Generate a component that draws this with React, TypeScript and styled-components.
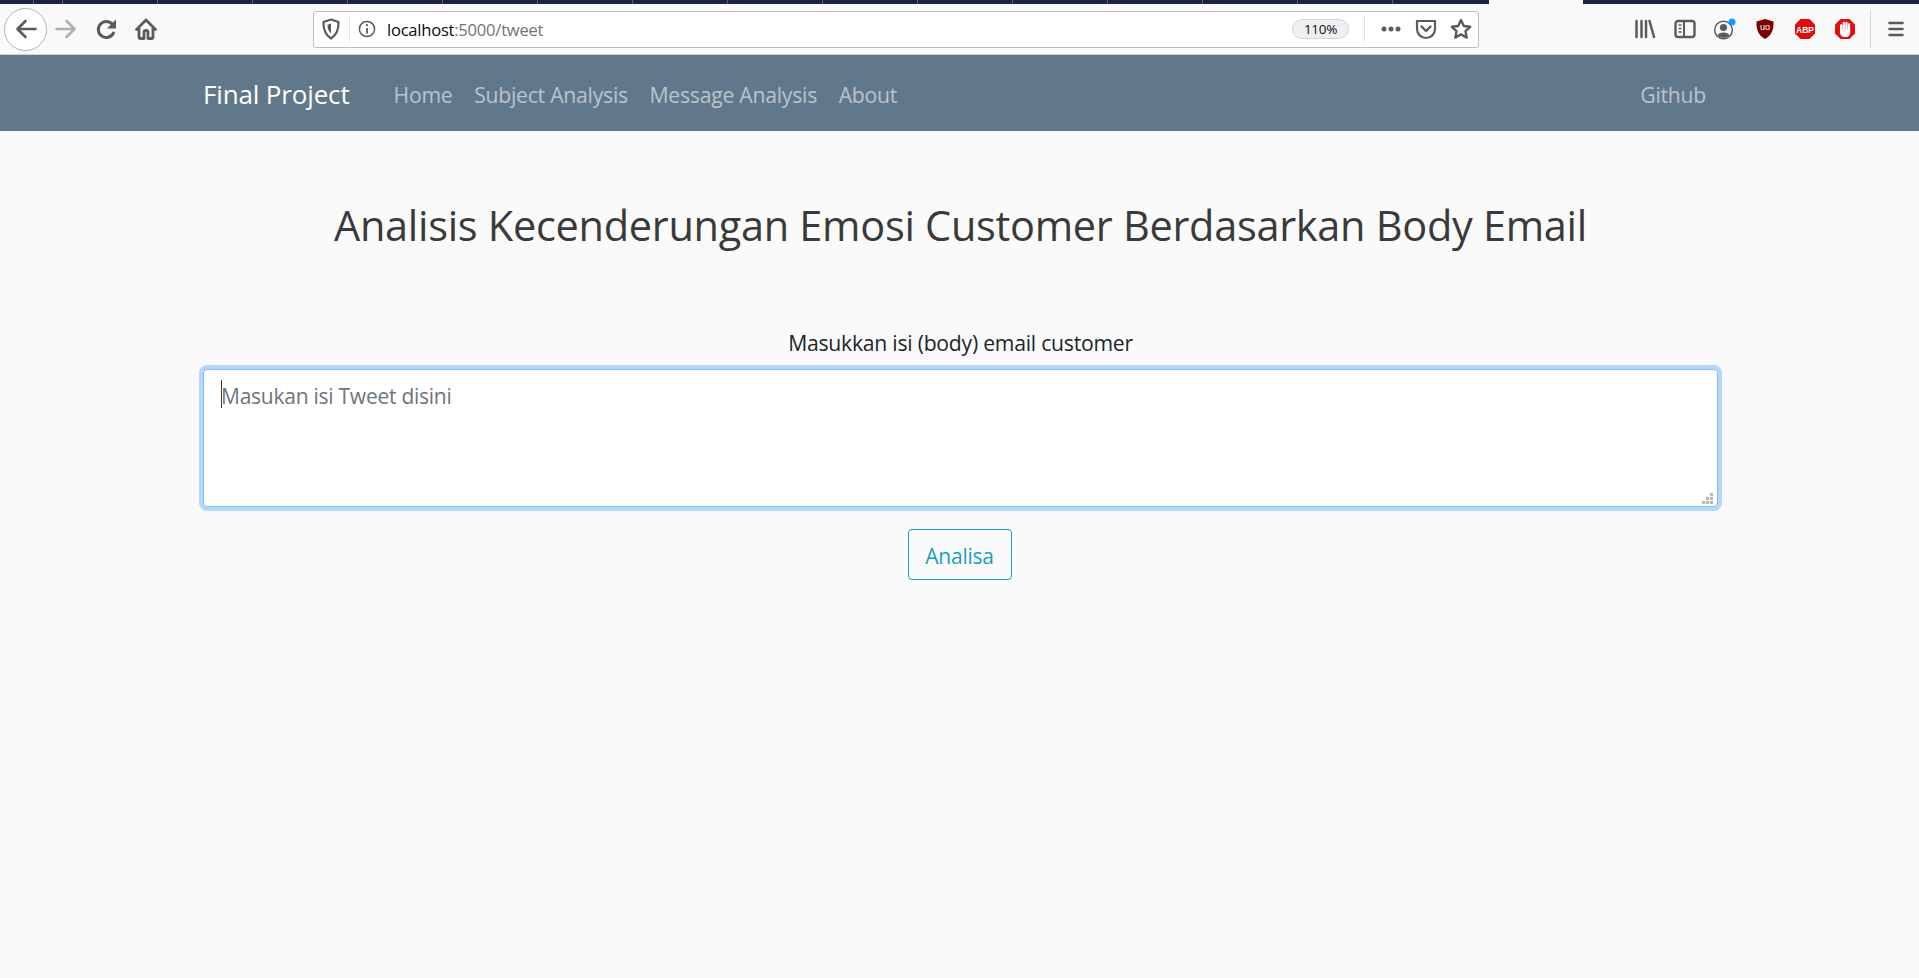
import React from "react";
import styled, { createGlobalStyle } from "styled-components";

const FONT = `"Open Sans", "Noto Sans", "Liberation Sans", sans-serif`;

const Global = createGlobalStyle`
  html, body { margin: 0; padding: 0; height: 100%; background: #fafafa; overflow: hidden; }
  body { font-family: ${FONT}; }
  * { box-sizing: border-box; }
`;

const TabStrip = styled.div`
  display: flex;
  height: 4px;
  background: #1c2143;
`;
const TabGap = styled.div<{ $w: number }>`
  width: ${(p) => p.$w}px;
  flex: none;
  border-right: 1px solid #5a5e78;
`;
const TabEnd = styled.div<{ $w: number }>`
  width: ${(p) => p.$w}px;
  flex: none;
`;
const ActiveTab = styled.div`
  width: 94px;
  flex: none;
  background: #fafafa;
`;

const Chrome = styled.div`
  display: flex;
  align-items: center;
  height: 51px;
  background: #f9f9fa;
  border-bottom: 1px solid #cfcfd2;
`;
const BackCircle = styled.div`
  width: 43px;
  height: 43px;
  flex: none;
  margin-left: 4px;
  border: 1px solid #b4b4b4;
  border-radius: 50%;
  background: #fff;
  display: flex;
  align-items: center;
  justify-content: center;
`;
const Slot = styled.div<{ $w: number; $ml?: number }>`
  width: ${(p) => p.$w}px;
  margin-left: ${(p) => p.$ml ?? 0}px;
  flex: none;
  display: flex;
  align-items: center;
  justify-content: center;
`;
const IconSvg = styled.svg`
  flex: none;
  display: block;
`;
const UrlBar = styled.div`
  width: 1166px;
  height: 37px;
  flex: none;
  margin-left: 148px;
  background: #fff;
  border: 1px solid #bdbdbd;
  border-radius: 3px;
  display: flex;
  align-items: center;
`;
const UrlDivider = styled.div<{ $ml: number; $h: number }>`
  width: 1px;
  height: ${(p) => p.$h}px;
  flex: none;
  background: #e3e3e5;
  margin-left: ${(p) => p.$ml}px;
`;
const UrlText = styled.div`
  font-size: 16.6px;
  color: #0c0c0d;
  width: 905px;
  margin-left: 4px;
  padding-top: 1px;
  flex: none;
  white-space: nowrap;
  letter-spacing: -0.25px;
`;
const UrlMuted = styled.span`
  color: #737373;
`;
const ZoomPill = styled.div`
  width: 57px;
  height: 20px;
  flex: none;
  border: 1px solid #d4d4d4;
  border-radius: 10px;
  background: #f0f0f2;
  color: #0c0c0d;
  font-size: 13.5px;
  display: flex;
  align-items: center;
  justify-content: center;
  letter-spacing: -0.3px;
`;
const ToolbarDivider = styled.div`
  width: 1px;
  height: 38px;
  flex: none;
  background: #d6d6d8;
  margin-left: 5px;
`;

const NavBar = styled.nav`
  height: 76px;
  background: #607889;
  display: flex;
  align-items: center;
  padding: 2px 213px 0 203px;
`;
const Brand = styled.a`
  font-size: 26px;
  color: #fff;
  margin-right: 44px;
  white-space: nowrap;
  letter-spacing: -0.15px;
`;
const NavLinks = styled.div`
  display: flex;
  gap: 21.7px;
  flex: 1;
`;
const NavLink = styled.a`
  font-size: 21.2px;
  color: rgba(255, 255, 255, 0.58);
  white-space: nowrap;
  letter-spacing: -0.25px;
`;

const Main = styled.main`
  width: 1515px;
  margin-left: 203px;
  display: flex;
  flex-direction: column;
  align-items: center;
`;
const Title = styled.h1`
  margin: 67px 0 0;
  font-size: 41.5px;
  line-height: 55px;
  font-weight: 400;
  color: #3a3a3a;
  white-space: nowrap;
  letter-spacing: -0.3px;
`;
const Label = styled.label`
  margin-top: 75px;
  font-size: 21.2px;
  line-height: 29px;
  color: #212529;
  letter-spacing: -0.25px;
`;
const AreaWrap = styled.div`
  position: relative;
  width: 100%;
  height: 138px;
  margin-top: 12px;
`;
const Area = styled.textarea`
  display: block;
  width: 100%;
  height: 100%;
  resize: none;
  outline: none;
  padding: 12px 17px;
  font-family: ${FONT};
  font-size: 21px;
  line-height: 29px;
  letter-spacing: -0.25px;
  background: #fff;
  color: #495057;
  border: 1px solid #80bdff;
  border-radius: 4px;
  box-shadow: 0 0 0 4px #b7d7fa;
  &::placeholder { color: #6c757d; opacity: 1; }
`;
const Caret = styled.div`
  position: absolute;
  left: 18px;
  top: 11px;
  width: 1px;
  height: 28px;
  background: #3a3a3a;
`;
const Grip = styled.svg`
  position: absolute;
  right: 3px;
  bottom: 1px;
`;
const Analyze = styled.button`
  margin: 22px 2px 0 0;
  width: 104px;
  height: 51px;
  background: transparent;
  border: 1px solid #17a2b8;
  border-radius: 4px;
  color: #17a2b8;
  font-family: ${FONT};
  font-size: 21px;
  letter-spacing: -0.25px;
  padding: 2px 0 0;
`;

const gray = "#5b5b5c";
const S = ({ w = 24, h = 24, children }: { w?: number; h?: number; children: React.ReactNode }) => (
  <IconSvg width={w} height={h} viewBox={`0 0 ${w} ${h}`} fill="none">{children}</IconSvg>
);

const Back = () => (
  <S><path d="M21.5 12H4M11.5 4 3.5 12l8 8" stroke={gray} strokeWidth="2.6" strokeLinecap="round" strokeLinejoin="round" /></S>
);
const Forward = () => (
  <S><path d="M2.5 12H20M12.5 4l8 8-8 8" stroke="#b1b1b3" strokeWidth="2.6" strokeLinecap="round" strokeLinejoin="round" /></S>
);
const Reload = () => (
  <S>
    <path d="M18.500 16A8 8 0 1 1 17.600 7.500" stroke={gray} strokeWidth="3" strokeLinecap="round" />
    <path d="M21 2.500v9h-9z" fill={gray} />
  </S>
);
const Home = () => (
  <S>
    <path d="M2.500 12.500 12 3l9.500 9.500" stroke={gray} strokeWidth="2.800" strokeLinecap="round" strokeLinejoin="round" />
    <path d="M5 11v9a1.500 1.500 0 0 0 1.500 1.500h3.500V15.500a2 2 0 0 1 4 0v6h3.500A1.500 1.500 0 0 0 19 20v-9" stroke={gray} strokeWidth="2.800" strokeLinejoin="round" />
  </S>
);
const Shield = () => (
  <S w={18} h={22}>
    <path d="M1.500 4 9 1.500 16.500 4c.3 7-1.500 12.500-7.500 16.500C3 16.500 1.200 11 1.500 4Z" stroke={gray} strokeWidth="2.200" strokeLinejoin="round" />
    <path d="M9 5.500v10c-2.500-2-3.500-5-3.500-8.800Z" fill={gray} />
  </S>
);
const Info = () => (
  <S w={18} h={18}>
    <circle cx="9" cy="9" r="7.600" stroke={gray} strokeWidth="1.500" />
    <circle cx="9" cy="5.200" r="1.100" fill={gray} />
    <path d="M9 8v5.500" stroke={gray} strokeWidth="1.800" />
  </S>
);
const Dots = () => (
  <S w={22} h={8}>
    <circle cx="4" cy="4" r="2.500" fill={gray} /><circle cx="11" cy="4" r="2.500" fill={gray} /><circle cx="18" cy="4" r="2.500" fill={gray} />
  </S>
);
const Pocket = () => (
  <S w={22} h={22}>
    <path d="M2 3h18v8a9 9 0 0 1-18 0Z" stroke={gray} strokeWidth="2.200" strokeLinejoin="round" />
    <path d="m6.500 8.500 4.500 4.500 4.500-4.500" stroke={gray} strokeWidth="2.400" strokeLinecap="round" strokeLinejoin="round" />
  </S>
);
const Star = () => (
  <S w={22} h={22}>
    <path d="m11 2 2.800 6 6.400.8-4.700 4.400 1.200 6.400L11 16.400l-5.700 3.200 1.200-6.400L1.800 8.800 8.200 8Z" stroke={gray} strokeWidth="2.400" strokeLinejoin="round" />
  </S>
);
const Library = () => (
  <S w={22} h={20}>
    <path d="M2.500 2v16M7.500 2v16M12 2v16M15.500 2 20 18" stroke={gray} strokeWidth="2.500" strokeLinecap="round" />
  </S>
);
const Sidebar = () => (
  <S w={22} h={20}>
    <rect x="1.500" y="2" width="19" height="16" rx="2.500" stroke={gray} strokeWidth="2.400" />
    <path d="M10 2v16" stroke={gray} strokeWidth="2" />
    <path d="M4.500 6H7.500M4.500 9.500H7.500M4.500 13H7.500" stroke={gray} strokeWidth="1.500" />
  </S>
);
const Account = () => (
  <S w={24} h={24}>
    <circle cx="10.500" cy="13" r="8.800" stroke={gray} strokeWidth="1.500" />
    <circle cx="10.500" cy="10.500" r="3.600" fill={gray} />
    <path d="M4.500 18.500c1-4 11-4 12 0a8.500 8.500 0 0 1-12 0Z" fill={gray} />
    <circle cx="19" cy="5" r="3.500" fill="#0a9dff" />
  </S>
);
const UBlock = () => (
  <S w={20} h={22}>
    <path d="M1.500 3.500 10 1l8.500 2.500c.3 8-1.500 13.500-8.500 17.500C3 17 1.200 11.500 1.500 3.500Z" fill="#800000" />
    <text x="10" y="11.500" textAnchor="middle" fontFamily="Liberation Sans" fontSize="9" fill="#fff">uo</text>
  </S>
);
const Abp = () => (
  <S w={22} h={22}>
    <path d="M6.500 1h9L21 6.500v9L15.500 21h-9L1 15.500v-9Z" fill="#e00b0b" />
    <text x="11" y="14.500" textAnchor="middle" fontFamily="Liberation Sans" fontSize="8.500" fontWeight="700" fill="#fff">ABP</text>
  </S>
);
const Stop = () => (
  <S w={22} h={22}>
    <path d="M6.500 1h9L21 6.500v9L15.500 21h-9L1 15.500v-9Z" fill="#e60d0d" />
    <path d="M7.200 13V7.500M9.800 12V4.800M12.400 12V4.800M15 12.500V6.500" stroke="#fff" strokeWidth="2.300" strokeLinecap="round" />
    <path d="M6 11.500h10.200v3c0 2.500-1.700 4.500-4.200 4.500h-1.500C8 19 6 17 6 14.500Z" fill="#fff" />
  </S>
);
const Menu = () => (
  <S w={18} h={18}>
    <path d="M2.500 3h13M2.500 9h13M2.500 15h13" stroke={gray} strokeWidth="2.600" strokeLinecap="round" />
  </S>
);

const tabWidths = [34, 29, ...Array.from({ length: 14 }, () => 95)];

export default function App() {
  return (
    <>
      <Global />
      <TabStrip>
        {tabWidths.map((w, i) => (
          <TabGap key={i} $w={w} />
        ))}
        <TabEnd $w={96} />
        <ActiveTab />
        <TabEnd $w={336} />
      </TabStrip>
      <Chrome>
        <BackCircle><Back /></BackCircle>
        <Slot $w={41} $ml={-2}><Forward /></Slot>
        <Slot $w={41}><Reload /></Slot>
        <Slot $w={38}><Home /></Slot>
        <UrlBar>
          <Slot $w={34}><Shield /></Slot>
          <UrlDivider $ml={1} $h={26} />
          <Slot $w={33}><Info /></Slot>
          <UrlText>localhost<UrlMuted>:5000/tweet</UrlMuted></UrlText>
          <ZoomPill>110%</ZoomPill>
          <UrlDivider $ml={15} $h={26} />
          <Slot $w={52}><Dots /></Slot>
          <Slot $w={17}><Pocket /></Slot>
          <Slot $w={53}><Star /></Slot>
        </UrlBar>
        <Slot $w={40} $ml={146}><Library /></Slot>
        <Slot $w={40}><Sidebar /></Slot>
        <Slot $w={40}><Account /></Slot>
        <Slot $w={40}><UBlock /></Slot>
        <Slot $w={40}><Abp /></Slot>
        <Slot $w={40}><Stop /></Slot>
        <ToolbarDivider />
        <Slot $w={50}><Menu /></Slot>
      </Chrome>
      <NavBar>
        <Brand>Final Project</Brand>
        <NavLinks>
          <NavLink>Home</NavLink>
          <NavLink>Subject Analysis</NavLink>
          <NavLink>Message Analysis</NavLink>
          <NavLink>About</NavLink>
        </NavLinks>
        <NavLink>Github</NavLink>
      </NavBar>
      <Main>
        <Title>Analisis Kecenderungan Emosi Customer Berdasarkan Body Email</Title>
        <Label>Masukkan isi (body) email customer</Label>
        <AreaWrap>
          <Area placeholder="Masukan isi Tweet disini" />
          <Caret />
          <Grip width="14" height="14" viewBox="0 0 14 14" fill="#b5b5b5">
            <rect x="9" y="1" width="3" height="3" />
            <rect x="5" y="5" width="3" height="3" /><rect x="9" y="5" width="3" height="3" />
            <rect x="1" y="9" width="3" height="3" /><rect x="5" y="9" width="3" height="3" /><rect x="9" y="9" width="3" height="3" />
          </Grip>
        </AreaWrap>
        <Analyze>Analisa</Analyze>
      </Main>
    </>
  );
}
